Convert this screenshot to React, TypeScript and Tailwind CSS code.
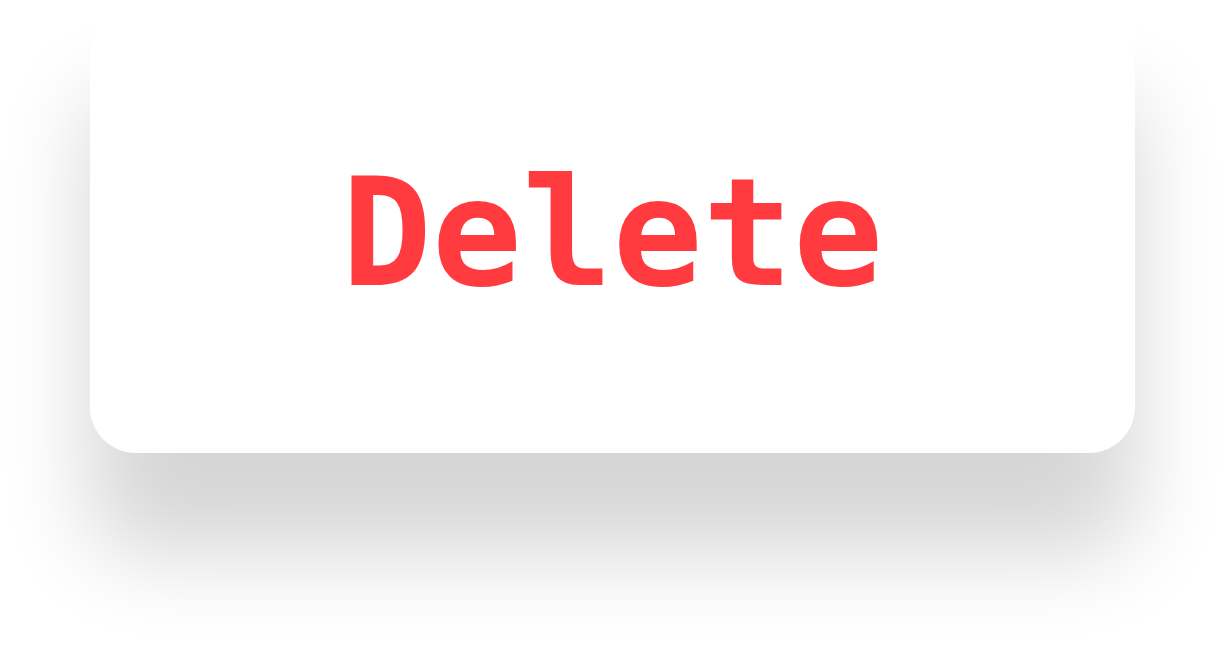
export default function App() {
  return (
    <div className="w-[1225px] h-[645px] bg-white overflow-hidden">
      <div className="ml-[90px] w-[1045px] h-[453px] pt-[12px] bg-white rounded-b-[46px] shadow-[0_100px_90px_rgba(0,0,0,0.165)] flex items-center justify-center">
        <span className="font-['DejaVu_Sans_Mono',monospace] font-bold text-[150px] leading-none text-[#ff3b3f]">
          Delete
        </span>
      </div>
    </div>
  );
}
